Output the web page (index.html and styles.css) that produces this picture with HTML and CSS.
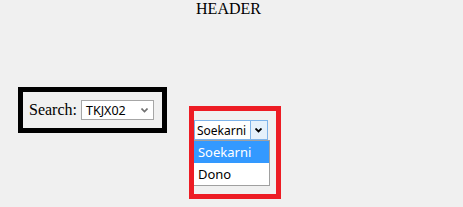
FILE: index.html
```html
<!DOCTYPE html>
<html lang="en">
<head>
    <meta charset="UTF-8">
    <title>Search</title>
    <link rel="stylesheet" href="styles.css">
</head>
<body>
    <div class="header">HEADER</div>
    <div class="row">
        <!-- kotak pencarian kelas -->
        <div class="search-box">
            <label>Search:</label>
            <div class="select plain">
                <span>TKJX02</span>
                <svg width="7" height="5" viewBox="0 0 7 5"><path d="M0.5 0.5 L3.5 3.5 L6.5 0.5" fill="none" stroke="#707070" stroke-width="1.6"/></svg>
            </div>
        </div>

        <!-- dropdown nama yang terbuka -->
        <div class="combo-box">
            <div class="select focused">
                <span>Soekarni</span>
                <span class="btn"><svg width="7" height="5" viewBox="0 0 7 5"><path d="M0.5 0.5 L3.5 3.5 L6.5 0.5" fill="none" stroke="#000" stroke-width="1.8"/></svg></span>
            </div>
            <ul class="options">
                <li class="active">Soekarni</li>
                <li>Dono</li>
            </ul>
        </div>
    </div>
</body>
</html>
```

FILE: styles.css
```css
body {
    margin: 0;
    background-color: #f0f0f0;
    font-family: "Liberation Serif", "Times New Roman", serif;
    font-size: 16px;
    color: #000;
}
.header {
    text-align: center;
    line-height: 18px;
    padding-right: 6px;
}
.row {
    display: flex;
    align-items: flex-start;
    margin-top: 69px;
    padding-left: 18px;
}
.search-box {
    display: flex;
    align-items: center;
    border: 5px solid #000;
    padding: 8px 8px 8px 6px;
}
.search-box label {
    margin-right: 4px;
}
.select {
    display: flex;
    align-items: center;
    justify-content: space-between;
    box-sizing: border-box;
    height: 20px;
    background: #ffffff;
    font-family: "Noto Sans", "DejaVu Sans", sans-serif;
    font-size: 12.5px;
}
.plain {
    width: 73px;
    border: 1px solid #a6a6a6;
    padding: 0 5px 0 4px;
}
.plain svg {
    margin-top: 1px;
}
.combo-box {
    margin-left: 22px;
    margin-top: 19px;
    width: 79px;
    border: 5px solid #ed1c24;
    padding: 9px 3px 8px 0;
}
.focused {
    width: 74px;
    border: 1px solid #7eb4ea;
    padding-left: 2px;
    font-size: 12px;
}
.focused .btn {
    display: flex;
    align-items: center;
    justify-content: center;
    width: 16px;
    height: 18px;
    border-left: 1px solid #7eb4ea;
    background: #e5f1fb;
}
.options {
    list-style: none;
    margin: 0;
    padding: 0;
    width: 76px;
    box-sizing: border-box;
    background: #ffffff;
    border: 1px solid #a0a0a0;
    border-left: none;
    font-family: "Noto Sans", "DejaVu Sans", sans-serif;
    font-size: 13px;
}
.options li {
    height: 22px;
    line-height: 22px;
    padding-left: 4px;
}
.options li.active {
    background: #3399ff;
    color: #ffffff;
}
```
